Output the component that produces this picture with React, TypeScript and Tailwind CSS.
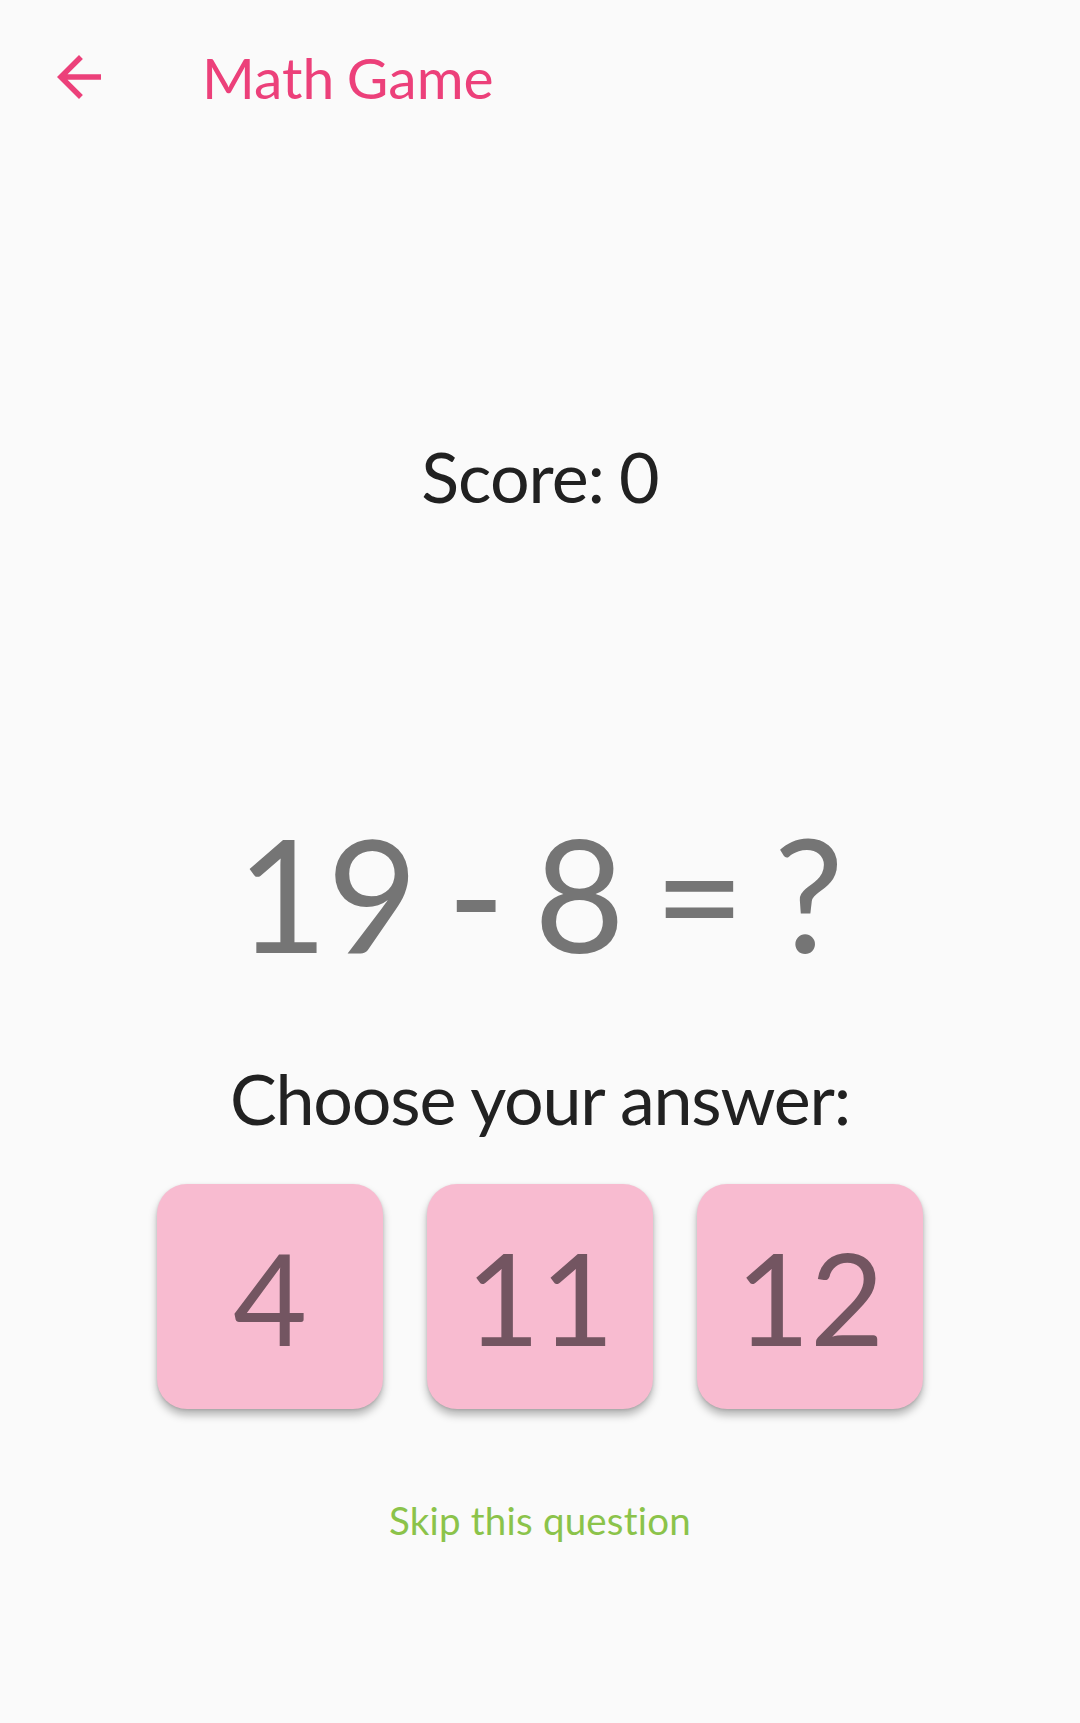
import React from "react";

function ArrowBack() {
  return (
    <svg width="66" height="66" viewBox="0 0 24 24" fill="#EC407A" aria-hidden="true">
      <path d="M20 11H7.83l5.59-5.59L12 4l-8 8 8 8 1.41-1.41L7.83 13H20v-2z" />
    </svg>
  );
}

export default function App() {
  const answers = ["4", "11", "12"];
  return (
    <div className="min-h-[1723px] w-full bg-[#FAFAFA] font-[family-name:Lato,'Open_Sans',sans-serif] [font-variant-ligatures:none]">
      <header className="flex h-[154px] items-center pl-[46px]">
        <ArrowBack />
        <h1 className="ml-[90px] text-[57px] leading-[1.2] font-normal text-[#EC407A] [word-spacing:-2px]">Math Game</h1>
      </header>
      <main className="flex flex-col items-center">
        <div className="mt-[280px] text-[70px] leading-[1.2] text-[#212121] tracking-[-1px] [word-spacing:-2px]">Score: 0</div>
        <div className="mt-[280px] text-[156.75px] leading-[1.2] text-[#757575] tracking-[-0.6px] [word-spacing:-10px]">19 - 8 = ?</div>
        <div className="mt-[70px] text-[70px] leading-[1.2] text-[#212121] tracking-[-1.2px]">Choose your answer:</div>
        <div className="mt-[44px] flex gap-[44px]">
          {answers.map((a) => (
            <button
              key={a}
              className="flex h-[225px] w-[226px] items-center justify-center rounded-[30px] bg-[#F8BBD0] text-[128px] leading-[1.2] text-[#735561] shadow-[0_6px_8px_rgba(0,0,0,0.28),0_1px_3px_rgba(0,0,0,0.12)]"
            >
              {a}
            </button>
          ))}
        </div>
        <button className="mt-[88px] text-[38.5px] leading-[1.2] tracking-[0.2px] text-[#8BC34A]">Skip this question</button>
      </main>
    </div>
  );
}
